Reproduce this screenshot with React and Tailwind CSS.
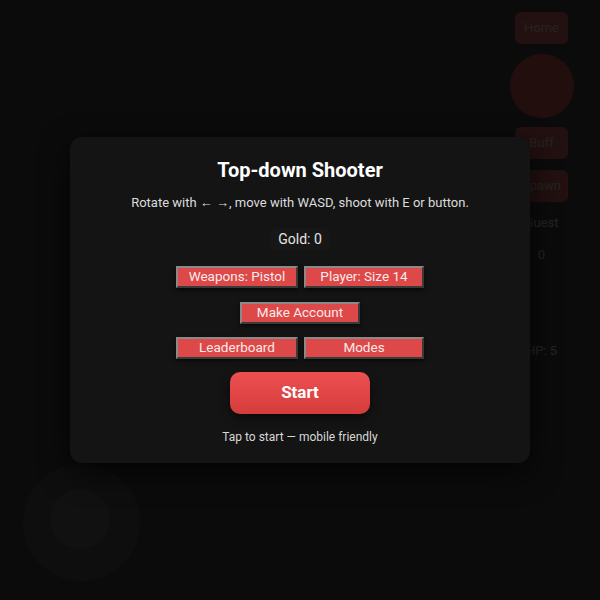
import React from "react"

const font = { fontFamily: "Roboto, 'Noto Sans', sans-serif" }

/* Small outset-style menu button */
function MenuButton({ children, className = "" }) {
  return (
    <button
      className={`h-[22px] bg-[#dd4848] text-[13.5px] leading-none text-[#fbeaea] border-2 border-t-[#8a8a8a] border-l-[#8a8a8a] border-r-[#3a3a3a] border-b-[#3a3a3a] shadow-[0_2px_4px_rgba(0,0,0,0.6)] ${className}`}
    >
      {children}
    </button>
  )
}

function SideButton({ children }) {
  return (
    <div className="w-[53px] h-[32px] rounded-md bg-[#e85a5a] flex items-center justify-center text-[13px] text-[#f2dede] overflow-hidden whitespace-nowrap">
      {children}
    </div>
  )
}

export default function App() {
  return (
    <div
      className="relative w-[600px] h-[600px] bg-[#333333] overflow-hidden"
      style={font}
    >
      {/* Game layer: sidebar and joystick */}
      <div className="absolute top-[12px] right-[32px] flex flex-col items-center w-[53px]">
        <SideButton>Home</SideButton>
        <div className="mt-[10px] w-[64px] h-[64px] rounded-full bg-[#e24848] shrink-0" />
        <div className="mt-[9px]">
          <SideButton>Buff</SideButton>
        </div>
        <div className="mt-[11px]">
          <SideButton>Spawn</SideButton>
        </div>
        <div className="mt-[11px] text-[13px] text-[#e0e0e0]">Guest</div>
        <div className="mt-[12px] text-[13px] text-[#e0e0e0]">0</div>
        <div className="mt-[77px] text-[13px] text-[#e0e0e0]">HP: 5</div>
      </div>
      <div className="absolute left-[23px] top-[464px] w-[117px] h-[117px] rounded-full bg-[#4a4a4a] flex items-center justify-center">
        <div className="w-[60px] h-[60px] rounded-full bg-[#5e5e5e] -translate-x-[2px] -translate-y-[4px]" />
      </div>

      {/* Dimming backdrop */}
      <div className="absolute inset-0 bg-[#060606]/[0.87]" />

      {/* Start menu */}
      <div className="absolute left-[70px] top-[137px] w-[460px] h-[326px] rounded-xl bg-[#141414] shadow-[0_10px_30px_rgba(0,0,0,0.7)] flex flex-col items-center pt-[20px]">
        <h1 className="text-[20px] font-bold text-white leading-[26px]">
          Top-down Shooter
        </h1>
        <p className="mt-[11px] text-[13px] text-[#dcdcdc] leading-[18px]">
          Rotate with ← →, move with WASD, shoot with E or button.
        </p>
        <div className="mt-[16px] px-[8px] rounded-md bg-[#171717] text-[14px] text-[#e4e4e4] leading-[22px]">
          Gold: 0
        </div>
        <div className="mt-[16px] flex gap-[6px]">
          <MenuButton className="w-[122px]">Weapons: Pistol</MenuButton>
          <MenuButton className="w-[120px]">Player: Size 14</MenuButton>
        </div>
        <div className="mt-[14px] flex">
          <MenuButton className="w-[120px]">Make Account</MenuButton>
        </div>
        <div className="mt-[13px] flex gap-[6px]">
          <MenuButton className="w-[122px]">Leaderboard</MenuButton>
          <MenuButton className="w-[120px]">Modes</MenuButton>
        </div>
        <button className="mt-[13px] w-[140px] h-[42px] rounded-[10px] bg-gradient-to-b from-[#ec4f4f] to-[#d63c3c] text-white text-[17px] font-bold shadow-[0_4px_10px_rgba(0,0,0,0.5)]">
          Start
        </button>
        <p className="mt-[14px] text-[12px] text-[#d8d8d8]">
          Tap to start — mobile friendly
        </p>
      </div>
    </div>
  )
}
